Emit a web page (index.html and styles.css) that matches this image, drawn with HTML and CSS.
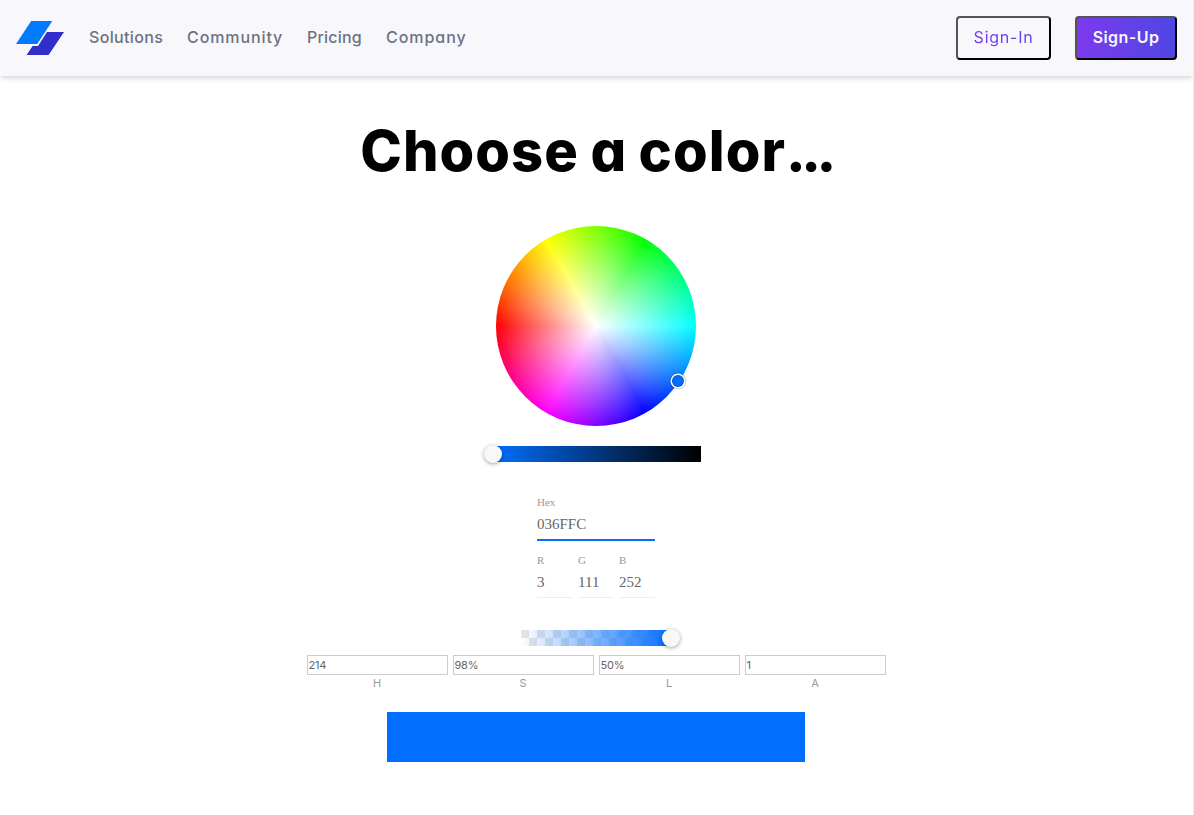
FILE: index.html
```html
<!DOCTYPE html>
<html lang="en">
<head>
<meta charset="utf-8">
<title>Choose a color</title>
<link rel="stylesheet" href="styles.css">
</head>
<body>
<div class="page">
  <header class="header">
    <svg class="logo" width="48" height="34" viewBox="0 0 48 34" aria-label="Logo">
      <path d="M15.2 0H36.3L21.2 23H0z" fill="#007aff"/>
      <path d="M31 11H48L32.6 34H10.6L16.6 25H22z" fill="#312ecb"/>
    </svg>
    <nav class="nav">
      <a class="link solutions">Solutions</a>
      <a class="link community">Community</a>
      <a class="link pricing">Pricing</a>
      <a class="link company">Company</a>
    </nav>
    <button class="button sign-in"><span>Sign-In</span></button>
    <button class="button sign-up"><span>Sign-Up</span></button>
  </header>
  <main class="main">
    <h1 class="title">Choose a color<span class="dots">...</span></h1>
    <div class="wheel"><span class="pointer"></span></div>
    <div class="shade"><span class="knob knob-start"></span></div>
    <div class="fields">
      <div class="field hex"><span class="label">Hex</span><span class="value">036FFC</span></div>
      <div class="rgb">
        <div class="field"><span class="label">R</span><span class="value">3</span></div>
        <div class="field"><span class="label">G</span><span class="value">111</span></div>
        <div class="field"><span class="label">B</span><span class="value">252</span></div>
      </div>
    </div>
    <div class="alpha"><span class="knob knob-end"></span></div>
    <div class="hsla">
      <label class="cell"><span class="box">214</span>H</label>
      <label class="cell"><span class="box">98%</span>S</label>
      <label class="cell"><span class="box">50%</span>L</label>
      <label class="cell"><span class="box">1</span>A</label>
    </div>
    <div class="swatch"></div>
  </main>
</div>
</body>
</html>
```
FILE: styles.css
```css
* { box-sizing: border-box; }
body { margin: 0; background: #fff; font-family: Inter, sans-serif; font-feature-settings: "cv11"; }
.page { width: 1194px; height: 815px; border-right: 1px solid #eee; overflow: hidden; }
.header { display: flex; align-items: center; height: 76px; padding: 0 16px; background: #f8f7fc; box-shadow: 0 4px 6px -1px rgba(0,0,0,.1), 0 2px 4px -1px rgba(0,0,0,.08); }
.logo { display: block; margin-right: 25px; }
.nav { display: flex; gap: 24px; flex: 1; padding-bottom: 2px; }
.link { font-size: 16px; font-weight: 500; line-height: 24px; color: #6b7280; white-space: nowrap; }
.solutions { width: 74px; letter-spacing: .35px; }
.community { width: 96px; letter-spacing: .9px; }
.pricing { width: 55px; letter-spacing: .2px; }
.company { width: 81px; letter-spacing: .95px; }
.button { height: 44px; padding: 0 0 2px; border: 2px outset #000; border-radius: 4px; font: 400 16px/24px Inter, sans-serif; }
.sign-in { width: 95px; margin-right: 24px; background: transparent; letter-spacing: .75px; }
.sign-in span { background: linear-gradient(90deg, #7c3aed, #4f46e5); background-size: 91px 100%; background-position: center; -webkit-background-clip: text; background-clip: text; color: transparent; }
.sign-up { width: 102px; background: linear-gradient(90deg, #7c3aed, #4f46e5); color: #f8f7fc; font-weight: 600; letter-spacing: .45px; }
.main { display: flex; flex-direction: column; align-items: center; padding-right: 1px; }
.title { margin: 33px 0 0; font-size: 56px; font-weight: 800; line-height: 84px; letter-spacing: 1.1px; word-spacing: -2px; color: #000; white-space: nowrap; }
.dots { letter-spacing: -4.5px; }
.wheel { position: relative; width: 200px; height: 200px; margin-top: 33px; border-radius: 50%; background: radial-gradient(closest-side, #fff, transparent), conic-gradient(from 270deg, #f00, #ff0, #0f0, #0ff, #00f, #f0f, #f00); }
.pointer { position: absolute; left: 176px; top: 149px; width: 12px; height: 12px; border-radius: 50%; background: #036fff; box-shadow: 0 0 0 1.5px #fff, inset 0 0 1px 1px rgba(0,0,0,.2), 0 0 1px 2px rgba(0,0,0,.3); }
.shade { position: relative; width: 210px; height: 16px; margin-top: 20px; background: linear-gradient(90deg, #036fff, #000); }
.knob { position: absolute; top: -1px; width: 18px; height: 18px; border-radius: 50%; background: #f8f8f8; box-shadow: 0 1px 4px rgba(0,0,0,.37); }
.knob-start { left: -7px; }
.knob-end { right: -9px; }
.fields { width: 118px; margin-top: 32px; font-family: "Liberation Serif", serif; }
.field { display: flex; flex-direction: column; height: 46px; border-bottom: 1px solid #eee; }
.hex { height: 47px; border-bottom: 2px solid #036fff; }
.label { font-size: 11px; line-height: 16px; color: #999; }
.value { margin-top: 6px; font-size: 15px; line-height: 17px; color: #666; }
.rgb { display: flex; gap: 5px; margin-top: 11px; }
.rgb .field { flex: 1; }
.alpha { position: relative; width: 150px; height: 16px; margin-top: 32px; background: linear-gradient(90deg, rgba(3,111,255,0), #036fff), repeating-conic-gradient(#fff 0 25%, #e6e6e6 0 50%) 0 0 / 16px 16px; }
.hsla { display: flex; gap: 5px; margin-top: 9px; }
.cell { display: flex; flex-direction: column; align-items: center; width: 141px; font-size: 11px; line-height: 17px; color: #999; }
.box { width: 100%; height: 20px; padding: 0 1px; border: 1px solid #ccc; line-height: 18px; letter-spacing: -.2px; color: #666; }
.swatch { width: 418px; height: 50px; margin-top: 20px; background: #036fff; }
```
